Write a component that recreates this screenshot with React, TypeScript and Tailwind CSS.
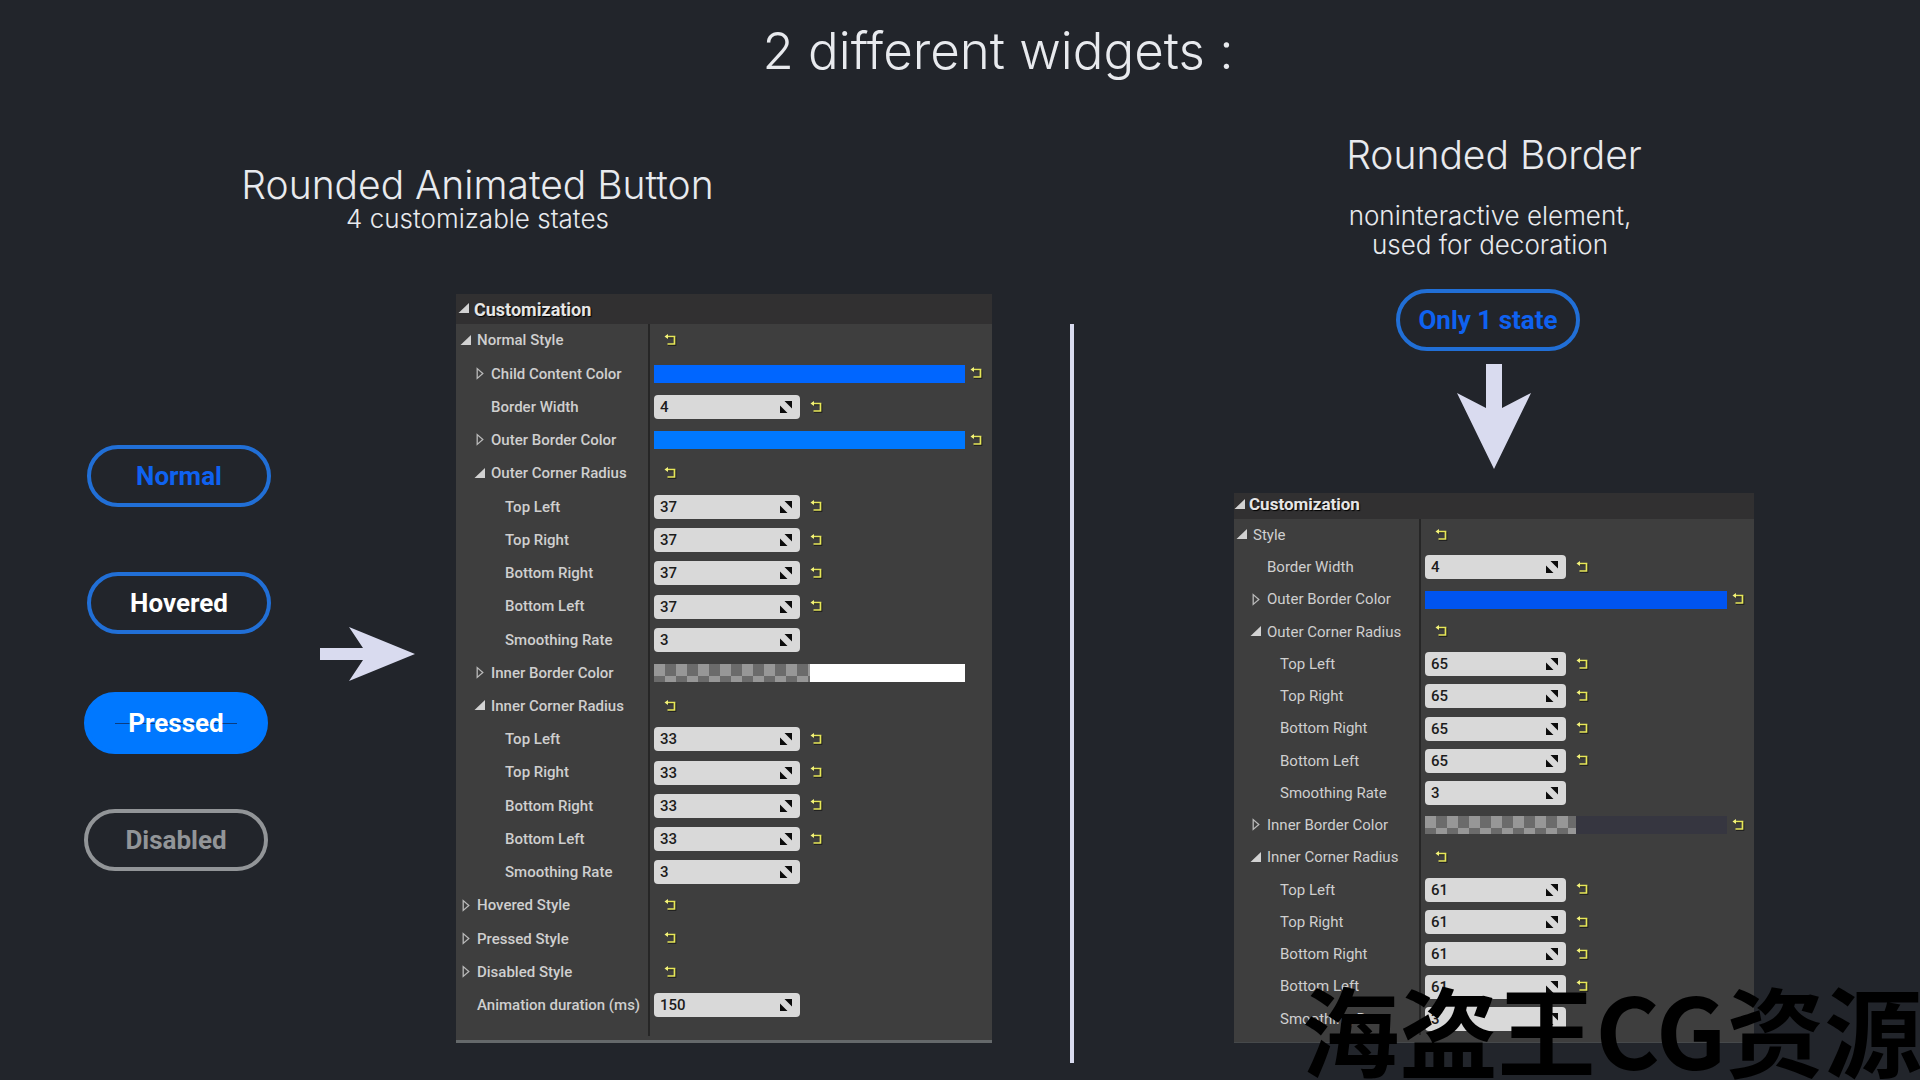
import { useId } from "react";

type Row = {
  label: string;
  level: number;
  arrow?: "open" | "closed";
  value?: string;
  color?: "azure" | "sky" | "royal" | "clearWhite" | "clearDark";
  reset?: boolean;
};

const corners = (value: string): Row[] => [
  { label: "Top Left", level: 2, value, reset: true },
  { label: "Top Right", level: 2, value, reset: true },
  { label: "Bottom Right", level: 2, value, reset: true },
  { label: "Bottom Left", level: 2, value, reset: true },
  { label: "Smoothing Rate", level: 2, value: "3" },
];

const buttonRows: Row[] = [
  { label: "Normal Style", level: 0, arrow: "open", reset: true },
  { label: "Child Content Color", level: 1, arrow: "closed", color: "azure", reset: true },
  { label: "Border Width", level: 1, value: "4", reset: true },
  { label: "Outer Border Color", level: 1, arrow: "closed", color: "sky", reset: true },
  { label: "Outer Corner Radius", level: 1, arrow: "open", reset: true },
  ...corners("37"),
  { label: "Inner Border Color", level: 1, arrow: "closed", color: "clearWhite" },
  { label: "Inner Corner Radius", level: 1, arrow: "open", reset: true },
  ...corners("33"),
  { label: "Hovered Style", level: 0, arrow: "closed", reset: true },
  { label: "Pressed Style", level: 0, arrow: "closed", reset: true },
  { label: "Disabled Style", level: 0, arrow: "closed", reset: true },
  { label: "Animation duration (ms)", level: 0, value: "150" },
];

const borderRows: Row[] = [
  { label: "Style", level: 0, arrow: "open", reset: true },
  { label: "Border Width", level: 1, value: "4", reset: true },
  { label: "Outer Border Color", level: 1, arrow: "closed", color: "royal", reset: true },
  { label: "Outer Corner Radius", level: 1, arrow: "open", reset: true },
  ...corners("65"),
  { label: "Inner Border Color", level: 1, arrow: "closed", color: "clearDark", reset: true },
  { label: "Inner Corner Radius", level: 1, arrow: "open", reset: true },
  ...corners("61"),
];

const wideIndents = ["pl-1", "pl-[18px]", "pl-8"];
const tightIndents = ["pl-0.5", "pl-4", "pl-[29px]"];

const fills = {
  azure: "bg-[#0066ff]",
  sky: "bg-[#0078ff]",
  royal: "bg-[#0054f0]",
  clearWhite: "bg-white",
  clearDark: "bg-[#363640]",
};

function Arrow({ open }: { open: boolean }) {
  return (
    <svg viewBox="0 0 12 14" className="w-3 h-3.5 shrink-0" aria-hidden="true">
      {open ? (
        <path d="M11 1V11H0.5Z" fill="#d2d2d2" />
      ) : (
        <path d="M3.2 1.6V11.4L8.8 6.5Z" fill="none" stroke="#b9b9b9" strokeWidth="1.3" />
      )}
    </svg>
  );
}

function ResetButton({ label }: { label: string }) {
  return (
    <button aria-label={`Reset ${label}`} className="shrink-0">
      <svg viewBox="0 0 13 13" className="w-[13px] h-[13px] block">
        <path d="M3 3.5H11.5V11H4" stroke="#1a1a1a" fill="none" strokeWidth="1.6" />
        <path d="M2 2.5H10.5V10H3.5" stroke="#e6e658" fill="none" strokeWidth="1.7" />
        <path d="M0.5 2.5L4 0V5Z" fill="#f2f27a" />
      </svg>
    </button>
  );
}

function PropertyRow({
  row,
  indents,
  labelWidth,
  inputWidth,
}: {
  row: Row;
  indents: string[];
  labelWidth: string;
  inputWidth: string;
}) {
  const id = useId();

  return (
    <div className="flex">
      <div
        className={`${labelWidth} ${indents[row.level]} shrink-0 flex items-center border-r-2 border-[#262626] text-[#cfcfcf] whitespace-nowrap`}
      >
        {row.arrow ? (
          <button aria-expanded={row.arrow === "open"} className="flex items-center gap-[5px]">
            <Arrow open={row.arrow === "open"} />
            {row.label}
          </button>
        ) : (
          <label htmlFor={id} className="pl-[17px]">
            {row.label}
          </label>
        )}
      </div>

      <div className="flex-1 flex items-center pl-1 pr-[9px]">
        {row.value && (
          <div className={`relative ${inputWidth} mr-2.5`}>
            <input
              id={id}
              defaultValue={row.value}
              className="block w-full h-6 rounded-[4px] bg-[#d9d9d9] pl-1.5 pr-6 font-medium text-[#1c1c1c] outline-none"
            />
            <svg
              viewBox="0 0 12 12"
              className="absolute right-2 top-1.5 w-3 h-3 pointer-events-none"
              aria-hidden="true"
            >
              <path d="M4.5 0H12V7.5Z M0 4.5V12H7.5Z" fill="#0c0c0c" />
            </svg>
          </div>
        )}

        {row.color && (
          <button aria-label={row.label} className="flex flex-1 h-[18px] mr-[5px]">
            {row.color.startsWith("clear") && (
              <span className="flex-1 h-full bg-[conic-gradient(#6b6b6b_25%,#979797_0_50%,#6b6b6b_0_75%,#979797_0)] bg-[length:22px_24px]" />
            )}
            <span className={`flex-1 h-full ${fills[row.color]}`} />
          </button>
        )}

        {!row.value && !row.color && <span className="w-2.5" />}
        {row.reset ? <ResetButton label={row.label} /> : <span className="w-[13px]" />}
      </div>
    </div>
  );
}

function StatePill({ label, style }: { label: string; style: string }) {
  return (
    <button
      className={`relative w-[184px] h-[62px] rounded-full border-4 text-[26px] font-bold ${style}`}
    >
      <span className="relative">{label}</span>
    </button>
  );
}

export default function App() {
  return (
    <div className="relative min-h-screen overflow-hidden bg-[#22252b] font-['Roboto',sans-serif] text-[#e8eaee]">
      <h1 className="pt-5 pl-[76px] text-center font-['Inter',sans-serif] font-light text-[51px] leading-[62px]">
        2 different widgets :
      </h1>

      <main className="grid grid-cols-[1070fr_4px_846fr]">
        {/* ROUNDED ANIMATED BUTTON */}
        <section className="pl-[84px] pr-[78px] pt-[82px] pb-5">
          <div className="mr-[121px] text-center font-['Inter',sans-serif] font-light">
            <h2 className="text-[39px] leading-[42px]">Rounded Animated Button</h2>
            <p className="text-[26px] leading-[26px]">4 customizable states</p>
          </div>

          <div className="flex items-start pt-[61px]">
            <div className="w-[187px] shrink-0 pt-[152px] flex flex-col">
              <div className="flex flex-col gap-[65px] items-end">
                <StatePill label="Normal" style="border-[#216fd6] text-[#0f62f0]" />
                <StatePill label="Hovered" style="border-[#216fd6] text-white" />
              </div>
              <div className="flex flex-col gap-[55px] items-start pt-[58px]">
                <StatePill
                  label="Pressed"
                  style="border-[#0078ff] bg-[#0078ff] text-white before:absolute before:inset-x-[27px] before:top-[27px] before:h-px before:bg-[#0b3d80]"
                />
                <StatePill label="Disabled" style="border-[#929598] text-[#929598]" />
              </div>
            </div>

            <svg
              viewBox="0 0 95 54"
              className="w-[95px] h-[54px] shrink-0 ml-[49px] mr-[41px] mt-[334px]"
              aria-hidden="true"
            >
              <path d="M0 21H43L29 0L95 27L29 54L43 33H0Z" fill="#d9dbef" />
            </svg>

            <div className="flex-1 mt-px bg-[#3e3e3e] border-b-3 border-[#65696b] font-medium text-[15px] pb-1">
              <button className="flex w-full items-center gap-1 h-[30px] pl-0.5 bg-[#313031] font-bold text-[18px] text-[#e6e6e6] text-shadow-[1px_1px_1px_#000]">
                <Arrow open />
                Customization
              </button>
              <div className="grid auto-rows-fr min-h-[698px]">
                {buttonRows.map((row, i) => (
                  <PropertyRow
                    key={i}
                    row={row}
                    indents={wideIndents}
                    labelWidth="w-[194px]"
                    inputWidth="w-[146px]"
                  />
                ))}
              </div>
              <div className="w-[194px] h-3.5 border-r-2 border-[#262626]" />
            </div>
          </div>
        </section>

        <div className="bg-[#d9dbef] mt-[242px]" />

        {/* ROUNDED BORDER */}
        <section className="pl-40 pr-[166px] pt-[52px]">
          <div className="flex flex-col items-center">
            <h2 className="font-['Inter',sans-serif] font-light text-[39px] leading-[42px]">
              Rounded Border
            </h2>
            <p className="pt-[25px] pr-2 text-center font-['Inter',sans-serif] font-light text-[26px] leading-[29px]">
              noninteractive element,
              <br />
              used for decoration
            </p>
            <div className="mt-[30px] mr-3 w-[184px] h-[62px] rounded-full border-4 border-[#216fd6] flex items-center justify-center text-[26px] font-bold text-[#0f62f0]">
              Only 1 state
            </div>
            <svg viewBox="0 0 74 105" className="w-[74px] h-[105px] mt-[13px]" aria-hidden="true">
              <path d="M29 0H45V44L74 29L37 105L0 29L29 44Z" fill="#d9dbef" />
            </svg>
          </div>

          <div className="mt-6 bg-[#3e3e3e] border-b border-[#46494b] text-[15px] pb-[7px]">
            <button className="flex w-full items-center gap-[3px] h-[26px] pb-0.5 bg-[#313031] font-bold text-[17px] text-[#e6e6e6] text-shadow-[1px_1px_1px_#000]">
              <Arrow open />
              Customization
            </button>
            <div className="grid auto-rows-fr min-h-[516px]">
              {borderRows.map((row, i) => (
                <PropertyRow
                  key={i}
                  row={row}
                  indents={tightIndents}
                  labelWidth="w-[187px]"
                  inputWidth="w-[141px]"
                />
              ))}
            </div>
          </div>
        </section>
      </main>

      <div className="absolute left-[68%] -ml-1 bottom-1 whitespace-nowrap font-['Noto_Sans_CJK_SC',sans-serif] font-bold text-[98px] leading-[98px] text-black pointer-events-none">
        海盗王CG资源
      </div>
    </div>
  );
}
